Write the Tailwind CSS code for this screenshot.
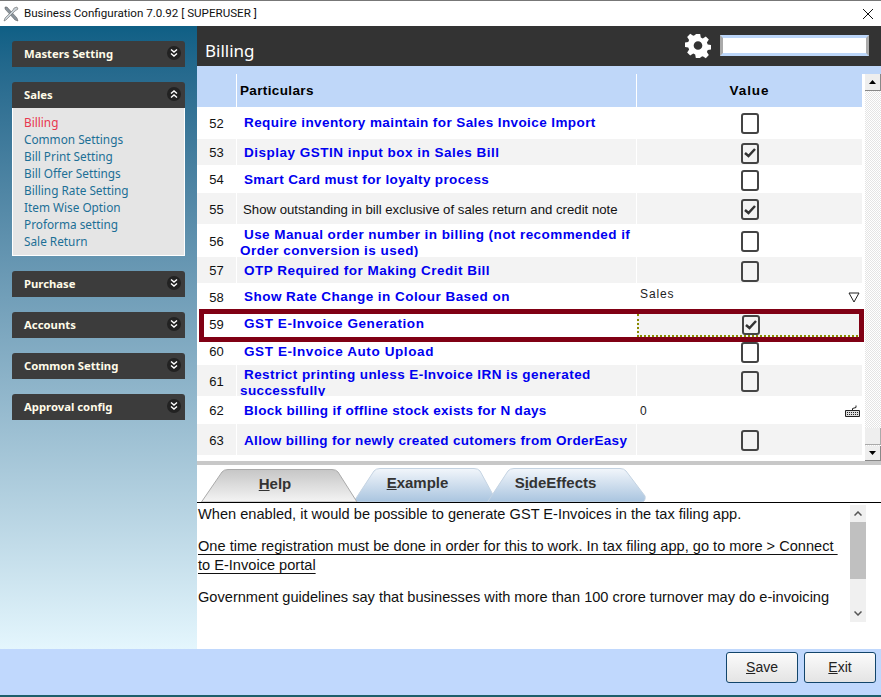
<!DOCTYPE html>
<html lang="en">
<head>
  <meta charset="UTF-8" />
  <title>Business Configuration</title>
  <script src="https://cdn.jsdelivr.net/npm/@tailwindcss/browser@4"></script>
</head>
<body class="h-screen overflow-hidden flex flex-col bg-white font-['Liberation_Sans',sans-serif]">

  <!-- Title bar -->
  <header class="h-[26px] shrink-0 border-t border-[#777] bg-white flex items-center relative">
    <svg class="ml-[3px] w-[16px] h-[16px]" viewBox="0 0 16 16">
      <path d="M2 1 L4 1 L14 12 L15 15 L12 14 L2 3 Z" fill="#8a949c" stroke="#555" stroke-width=".5"/>
      <path d="M14 1 L15 3 L12 5 L3 14 L1 15 L2 12 L10 4 L11 2 Z" fill="#c9d2d8" stroke="#555" stroke-width=".5"/>
    </svg>
    <span class="ml-[5px] text-[11.600px] text-[#111] font-['Roboto',sans-serif] whitespace-nowrap">Business Configuration 7.0.92 [ SUPERUSER ]</span>
    <svg class="ml-auto mr-[8px] w-[10px] h-[10px]" viewBox="0 0 10 10"><path d="M0 0 L10 10 M10 0 L0 10" stroke="#111" stroke-width="1"/></svg>
  </header>

  <div class="flex-1 flex min-h-0">
    <!-- Sidebar -->
    <aside class="w-[197px] shrink-0 bg-gradient-to-b from-[#0e5f85] to-[#e4f6fd] pt-[15px] pl-[12px]">
      <div class="w-[173px] flex flex-col font-['Noto_Sans',sans-serif]">
        <div class="h-[26px] bg-[#3c3c3c] rounded-t-[3px] flex items-center justify-between pl-[12px] pr-[4px] text-[#fffbe8] font-bold text-[11.300px]">Masters Setting
          <span class="w-[14px] h-[14px] rounded-full bg-[#222] flex items-center justify-center -mt-[3px]"><svg class="w-[8px] h-[8px]" viewBox="0 0 8 8" fill="none" stroke="#fff" stroke-width="1.4"><path d="M1 0.5 L4 3 L7 0.5 M1 4.5 L4 7 L7 4.5"/></svg></span>
        </div>
        <div class="mt-[15px] h-[26px] bg-[#3c3c3c] rounded-t-[3px] flex items-center justify-between pl-[12px] pr-[4px] text-[#fffbe8] font-bold text-[11.300px]">Sales
          <span class="w-[14px] h-[14px] rounded-full bg-[#222] flex items-center justify-center -mt-[3px]"><svg class="w-[8px] h-[8px]" viewBox="0 0 8 8" fill="none" stroke="#fff" stroke-width="1.4"><path d="M1 3.5 L4 1 L7 3.5 M1 7.5 L4 5 L7 7.5"/></svg></span>
        </div>
        <ul class="h-[148px] bg-[#e5e5e5] border-x border-b border-white pl-[11px] pt-[6px] text-[11.800px] leading-[17px] text-[#1c6f96]">
          <li class="text-[#e8364f]">Billing</li>
          <li>Common Settings</li>
          <li>Bill Print Setting</li>
          <li>Bill Offer Settings</li>
          <li>Billing Rate Setting</li>
          <li>Item Wise Option</li>
          <li>Proforma setting</li>
          <li>Sale Return</li>
        </ul>
        <div class="mt-[15px] h-[26px] bg-[#3c3c3c] rounded-t-[3px] flex items-center justify-between pl-[12px] pr-[4px] text-[#fffbe8] font-bold text-[11.300px]">Purchase
          <span class="w-[14px] h-[14px] rounded-full bg-[#222] flex items-center justify-center -mt-[3px]"><svg class="w-[8px] h-[8px]" viewBox="0 0 8 8" fill="none" stroke="#fff" stroke-width="1.4"><path d="M1 0.5 L4 3 L7 0.5 M1 4.5 L4 7 L7 4.5"/></svg></span>
        </div>
        <div class="mt-[15px] h-[26px] bg-[#3c3c3c] rounded-t-[3px] flex items-center justify-between pl-[12px] pr-[4px] text-[#fffbe8] font-bold text-[11.300px]">Accounts
          <span class="w-[14px] h-[14px] rounded-full bg-[#222] flex items-center justify-center -mt-[3px]"><svg class="w-[8px] h-[8px]" viewBox="0 0 8 8" fill="none" stroke="#fff" stroke-width="1.4"><path d="M1 0.5 L4 3 L7 0.5 M1 4.5 L4 7 L7 4.5"/></svg></span>
        </div>
        <div class="mt-[15px] h-[26px] bg-[#3c3c3c] rounded-t-[3px] flex items-center justify-between pl-[12px] pr-[4px] text-[#fffbe8] font-bold text-[11.300px]">Common Setting
          <span class="w-[14px] h-[14px] rounded-full bg-[#222] flex items-center justify-center -mt-[3px]"><svg class="w-[8px] h-[8px]" viewBox="0 0 8 8" fill="none" stroke="#fff" stroke-width="1.4"><path d="M1 0.5 L4 3 L7 0.5 M1 4.5 L4 7 L7 4.5"/></svg></span>
        </div>
        <div class="mt-[15px] h-[26px] bg-[#3c3c3c] rounded-t-[3px] flex items-center justify-between pl-[12px] pr-[4px] text-[#fffbe8] font-bold text-[11.300px]">Approval config
          <span class="w-[14px] h-[14px] rounded-full bg-[#222] flex items-center justify-center -mt-[3px]"><svg class="w-[8px] h-[8px]" viewBox="0 0 8 8" fill="none" stroke="#fff" stroke-width="1.4"><path d="M1 0.5 L4 3 L7 0.5 M1 4.5 L4 7 L7 4.5"/></svg></span>
        </div>
      </div>
    </aside>

    <!-- Main -->
    <main class="flex-1 flex flex-col min-w-0">
      <div class="h-[40px] shrink-0 bg-[#333] flex items-center pl-[8px] pr-[12px]">
        <h1 class="mt-[10px] text-[17px] text-white font-['Noto_Sans',sans-serif]">Billing</h1>
        <svg class="ml-auto w-[26px] h-[26px]" viewBox="0 0 24 24" fill="#fff"><path fill-rule="evenodd" d="M10 1h4l.6 3.2 1.8.8 2.8-1.8 2.8 2.8-1.8 2.8.8 1.8 3.2.6v4l-3.2.6-.8 1.8 1.8 2.8-2.8 2.8-2.8-1.8-1.8.8L14 23h-4l-.6-3.2-1.8-.8-2.8 1.8L2 18l1.8-2.8-.8-1.8L-.2 12.8v-4L3 8.2l.8-1.8L2 3.6 4.8.8l2.8 1.8 1.8-.8z M12 7.500a4 4 0 1 0 0 8 4 4 0 0 0 0-8z"/></svg>
        <div class="ml-[9px] mb-[1px] w-[149px] h-[21px] bg-white border-y-[3px] border-y-[#bcd6f9] border-x-[3px] border-x-[#aaa]"></div>
      </div>

      <!-- Grid -->
      <div class="h-[395px] shrink-0 flex flex-col relative">
        <div class="h-[8px] bg-[#bfd7f9]"></div>
        <div class="flex-1 flex min-h-0">
          <div class="w-[665px]">
            <div class="h-[32px] grid grid-cols-[39px_399px_225px] gap-x-px text-[13.500px]">
              <div class="bg-[#bfd7f9]"></div>
              <div class="bg-[#bfd7f9] pl-[3px] font-bold tracking-[0.36px] leading-[33px] text-black">Particulars</div>
              <div class="bg-[#bfd7f9] text-center font-bold tracking-[0.9px] leading-[33px] text-black">Value</div>
            </div>
            <div class="grid grid-cols-[39px_399px_225px] gap-x-px text-[13.500px] text-[#111] font-bold">
              <div class="h-[33px] pt-[2px] flex items-center justify-center font-normal text-[13px]">52</div>
              <div class="h-[33px] pt-[2px] flex items-center pl-[7px] text-[#0000f0] tracking-[0.41px]">Require inventory maintain for Sales Invoice Import</div>
              <div class="h-[33px] pt-[2px] flex items-center justify-center"><span class="block w-[18px] h-[21px] border-[2px] border-[#444] rounded-[3px]"></span></div>

              <div class="h-[26px] pt-[2px] bg-[#f3f3f3] flex items-center justify-center font-normal text-[13px]">53</div>
              <div class="h-[26px] pt-[2px] bg-[#f3f3f3] flex items-center pl-[7px] text-[#0000f0] tracking-[0.5px]">Display GSTIN input box in Sales Bill</div>
              <div class="h-[26px] pt-[2px] bg-[#f3f3f3] flex items-center justify-center"><span class="flex items-center justify-center w-[18px] h-[21px] border-[2px] border-[#444] rounded-[3px]"><svg class="w-[12px] h-[10px]" viewBox="0 0 12 10" fill="none" stroke="#333" stroke-width="2.500"><path d="M1 5 L4.500 8 L11 1"/></svg></span></div>

              <div class="h-[28px] pt-[2px] flex items-center justify-center font-normal text-[13px]">54</div>
              <div class="h-[28px] pt-[2px] flex items-center pl-[7px] text-[#0000f0] tracking-[0.36px]">Smart Card must for loyalty process</div>
              <div class="h-[28px] pt-[2px] flex items-center justify-center"><span class="block w-[18px] h-[21px] border-[2px] border-[#444] rounded-[3px]"></span></div>

              <div class="h-[31px] pt-[2px] bg-[#f3f3f3] flex items-center justify-center font-normal text-[13px]">55</div>
              <div class="h-[31px] pt-[3px] bg-[#f3f3f3] flex items-center pl-[6px] font-normal text-[13.200px] text-[#111] whitespace-nowrap">Show outstanding in bill exclusive of sales return and credit note</div>
              <div class="h-[31px] pt-[2px] bg-[#f3f3f3] flex items-center justify-center"><span class="flex items-center justify-center w-[18px] h-[21px] border-[2px] border-[#444] rounded-[3px]"><svg class="w-[12px] h-[10px]" viewBox="0 0 12 10" fill="none" stroke="#333" stroke-width="2.500"><path d="M1 5 L4.500 8 L11 1"/></svg></span></div>

              <div class="h-[33px] pt-[2px] flex items-center justify-center font-normal text-[13px]">56</div>
              <div class="h-[33px] pt-[3px] pl-[3px] text-[#0000f0] leading-[16px] whitespace-nowrap"><span class="pl-[4px] tracking-[0.43px]">Use Manual order number in billing (not recommended if</span><br><span class="tracking-[0.46px]">Order conversion is used)</span></div>
              <div class="h-[33px] pt-[2px] flex items-center justify-center"><span class="block w-[18px] h-[21px] border-[2px] border-[#444] rounded-[3px]"></span></div>

              <div class="h-[26px] pt-[2px] bg-[#f3f3f3] flex items-center justify-center font-normal text-[13px]">57</div>
              <div class="h-[26px] pt-[2px] bg-[#f3f3f3] flex items-center pl-[7px] text-[#0000f0] tracking-[0.48px]">OTP Required for Making Credit Bill</div>
              <div class="h-[26px] pt-[2px] bg-[#f3f3f3] flex items-center justify-center"><span class="block w-[18px] h-[21px] border-[2px] border-[#444] rounded-[3px]"></span></div>

              <div class="h-[27px] pt-[2px] flex items-center justify-center font-normal text-[13px]">58</div>
              <div class="h-[27px] pt-[2px] flex items-center pl-[7px] text-[#0000f0] tracking-[0.46px]">Show Rate Change in Colour Based on</div>
              <div class="h-[27px] flex items-start pt-[2px] pl-[3px] pr-[2px] justify-between font-normal text-[12px] text-[#222] tracking-[0.9px]">Sales
                <svg class="w-[12px] h-[11px] mt-[7px]" viewBox="0 0 12 11" fill="none" stroke="#222"><path d="M1 1 H11 L6 10 Z"/></svg>
              </div>

              <div class="h-[27px] flex items-center justify-center font-normal pt-[2px] text-[13px]">59</div>
              <div class="h-[27px] flex items-center pl-[7px] pt-[2px] text-[#0000f0] tracking-[0.58px]">GST E-Invoice Generation</div>
              <div class="h-[27px] pt-[4px]"><div class="h-full bg-[#f3f3f3] border-l-2 border-b-2 border-dotted border-[#8a8a00] flex items-center justify-center"><span class="flex items-center justify-center w-[18px] h-[20px] border-[2px] border-[#444] rounded-[3px]"><svg class="w-[12px] h-[10px]" viewBox="0 0 12 10" fill="none" stroke="#333" stroke-width="2.500"><path d="M1 5 L4.500 8 L11 1"/></svg></span></div></div>

              <div class="h-[28px] pt-[2px] flex items-center justify-center font-normal text-[13px]">60</div>
              <div class="h-[28px] pt-[2px] flex items-center pl-[7px] text-[#0000f0] tracking-[0.6px]">GST E-Invoice Auto Upload</div>
              <div class="h-[28px] pt-[2px] flex items-center justify-center"><span class="block w-[18px] h-[21px] border-[2px] border-[#444] rounded-[3px]"></span></div>

              <div class="h-[31px] pt-[2px] bg-[#f3f3f3] flex items-center justify-center font-normal text-[13px]">61</div>
              <div class="h-[31px] pt-[2px] bg-[#f3f3f3] pl-[3px] text-[#0000f0] leading-[16px] overflow-hidden whitespace-nowrap"><span class="pl-[4px] tracking-[0.43px]">Restrict printing unless E-Invoice IRN is generated</span><br><span class="tracking-[0.38px]">successfully</span></div>
              <div class="h-[31px] pt-[2px] bg-[#f3f3f3] flex items-center justify-center"><span class="block w-[18px] h-[21px] border-[2px] border-[#444] rounded-[3px]"></span></div>

              <div class="h-[28px] pt-[2px] flex items-center justify-center font-normal text-[13px]">62</div>
              <div class="h-[28px] pt-[2px] flex items-center pl-[7px] text-[#0000f0] tracking-[0.32px]">Block billing if offline stock exists for N days</div>
              <div class="h-[28px] pt-[2px] flex items-center pl-[3px] pr-[2px] justify-between font-normal text-[12px] text-[#222]">0
                <svg class="w-[15px] h-[12px]" viewBox="0 0 15 12" fill="none" stroke="#222"><path d="M.5 5.500H14.500V11.500H.5Z" fill="#ddd"/><path d="M2 7.500H13M2 9.500H13" stroke-dasharray="1 1"/><path d="M7.500 5.500V3.500L11 2.500V.5"/></svg>
              </div>

              <div class="h-[31px] pt-[2px] bg-[#f3f3f3] flex items-center justify-center font-normal text-[13px]">63</div>
              <div class="h-[31px] pt-[3px] bg-[#f3f3f3] flex items-center pl-[7px] text-[#0000f0] tracking-[0.34px] whitespace-nowrap">Allow billing for newly created cutomers from OrderEasy</div>
              <div class="h-[31px] pt-[2px] bg-[#f3f3f3] flex items-center justify-center"><span class="block w-[18px] h-[21px] border-[2px] border-[#444] rounded-[3px]"></span></div>
            </div>
          </div>
          <!-- Grid scrollbar -->
          <div class="ml-[3px] w-[16px] flex flex-col bg-[repeating-conic-gradient(#e4e4e4_0_25%,#fff_0_50%)] bg-[length:2px_2px]">
            <div class="h-[17px] bg-[#eee] border-r border-b border-[#888] flex items-center justify-center"><svg class="w-[7px] h-[4px]" viewBox="0 0 7 4"><path d="M3.500 0 L7 4 H0 Z" fill="#000"/></svg></div>
            <div class="flex-1"></div>
            <div class="h-[17px] mb-px bg-[#eee] border-r border-b border-[#aaa]"></div>
            <div class="h-[15px] bg-[#eee] border-r border-b border-[#888] flex items-center justify-center"><svg class="w-[7px] h-[4px]" viewBox="0 0 7 4"><path d="M0 0 H7 L3.500 4 Z" fill="#000"/></svg></div>
          </div>
        </div>
        <!-- Selected row frame -->
        <div class="absolute left-[2px] top-[243px] w-[665px] h-[33px] border-[5px] border-[#800014] pointer-events-none"></div>
      </div>

      <div class="h-[4px] shrink-0 bg-[#c8c8c8]"></div>

      <!-- Tabs -->
      <div class="h-[38px] shrink-0 border-b border-black flex items-end pl-[4px] font-bold text-[15px] text-[#333]">
        <div class="relative w-[157px] h-[33px] pr-[9px] flex items-center justify-center z-10">
          <svg class="absolute inset-0 w-full h-full" viewBox="0 0 157 33"><defs><linearGradient id="helpTab" x1="0" y1="0" x2="0" y2="1"><stop offset="0" stop-color="#c6c6c6"/><stop offset="1" stop-color="#f4f4f4"/></linearGradient></defs><path d="M.5 33 L21 3 Q23 .5 27 .5 H131 Q135 .5 137 3 L156 33 Z" fill="url(#helpTab)" stroke="#aaa"/></svg>
          <span class="relative -mt-[2px]"><u>H</u>elp</span>
        </div>
        <div class="relative -ml-[5px] w-[145px] h-[34px] pr-[16px] flex items-center justify-center">
          <svg class="absolute inset-0 w-full h-full" viewBox="0 0 145 34"><defs><linearGradient id="otherTab" x1="0" y1="0" x2="0" y2="1"><stop offset="0" stop-color="#f2f6fb"/><stop offset="1" stop-color="#a9c4df"/></linearGradient></defs><path d="M.5 34 L21 3 Q23 .5 27 .5 H121 Q125 .5 127 3 L144 34 Z" fill="url(#otherTab)" stroke="#c4d3e2"/></svg>
          <span class="relative -mt-[3px]"><u>E</u>xample</span>
        </div>
        <div class="relative -ml-[11px] w-[159px] h-[34px] pr-[22px] flex items-center justify-center">
          <svg class="absolute inset-0 w-full h-full" viewBox="0 0 159 34"><path d="M.5 34 L21 3 Q23 .5 27 .5 H133 Q137 .5 139 3 L158 28 Q159 34 154 34 Z" fill="url(#otherTab)" stroke="#c4d3e2"/></svg>
          <span class="relative -mt-[3px]">S<u>i</u>deEffects</span>
        </div>
      </div>

      <!-- Help text -->
      <div class="flex-1 flex min-h-0 relative text-[14.600px] leading-[19px] text-[#111]">
        <div class="w-[653px] pl-px pt-[2px] whitespace-nowrap">
          <p>When enabled, it would be possible to generate GST E-Invoices in the tax filing app.</p>
          <p class="mt-[13px] underline underline-offset-[3px]">One time registration must be done in order for this to work. In tax filing app, go to more &gt; Connect&nbsp;<br>to E-Invoice portal</p>
          <p class="mt-[13px]">Government guidelines say that businesses with more than 100 crore turnover may do e-invoicing</p>
        </div>
        <div class="mt-[2px] w-[16px] h-[117px] bg-[#f0f0f0] flex flex-col items-center">
          <svg class="mt-[6px] w-[8px] h-[5px]" viewBox="0 0 8 5" fill="none" stroke="#555" stroke-width="1.500"><path d="M.5 4.500 L4 1 L7.500 4.500"/></svg>
          <div class="mt-[6px] w-full h-[57px] bg-[#c0c0c0]"></div>
          <svg class="mt-auto mb-[6px] w-[8px] h-[5px]" viewBox="0 0 8 5" fill="none" stroke="#555" stroke-width="1.500"><path d="M.5 .5 L4 4 L7.500 .5"/></svg>
        </div>
      </div>
    </main>
  </div>

  <!-- Footer -->
  <footer class="h-[48px] shrink-0 bg-[#c0d8fd] border-b-2 border-[#1f5f6b] flex justify-end gap-[6px] pr-[5px] pt-[3px]">
    <button class="w-[72px] h-[31px] rounded-[3px] border border-[#12456b] bg-gradient-to-b from-[#fbfbfb] to-[#e4e4e4] text-[14px] text-[#222]"><u>S</u>ave</button>
    <button class="w-[72px] h-[31px] rounded-[3px] border border-[#12456b] bg-gradient-to-b from-[#fbfbfb] to-[#e4e4e4] text-[14px] text-[#222]"><u>E</u>xit</button>
  </footer>
</body>
</html>
